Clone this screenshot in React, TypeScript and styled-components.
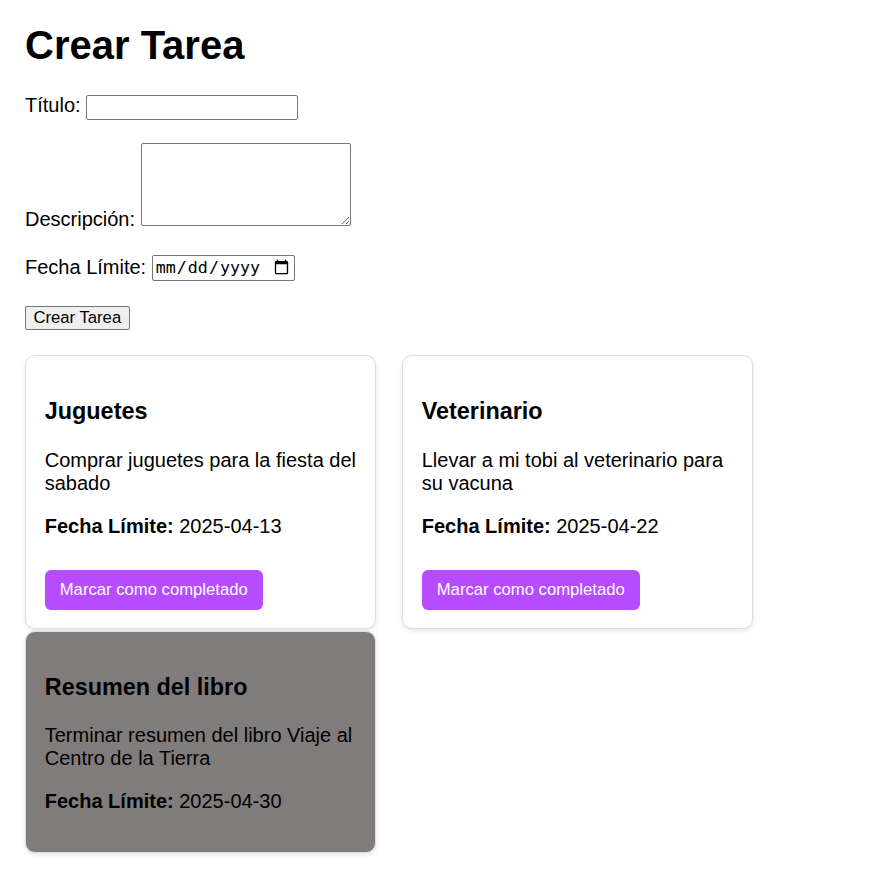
import { useState } from 'react'
import styled, { createGlobalStyle } from 'styled-components'

const GlobalStyle = createGlobalStyle`
  html, body {
    margin: 0;
    padding: 0;
    background: #fff;
  }
  body {
    font-family: "Liberation Sans", Arial, sans-serif;
    font-size: 20px;
    color: #000;
  }
`

type Task = {
  id: number
  title: string
  description: string
  dueDate: string
  completed: boolean
}

const initialTasks: Task[] = [
  { id: 1, title: 'Juguetes', description: 'Comprar juguetes para la fiesta del sabado', dueDate: '2025-04-13', completed: false },
  { id: 2, title: 'Veterinario', description: 'Llevar a mi tobi al veterinario para su vacuna', dueDate: '2025-04-22', completed: false },
  { id: 3, title: 'Resumen del libro', description: 'Terminar resumen del libro Viaje al Centro de la Tierra', dueDate: '2025-04-30', completed: true },
]

export default function App() {
  const [tasks, setTasks] = useState<Task[]>(initialTasks)
  const [title, setTitle] = useState('')
  const [description, setDescription] = useState('')
  const [dueDate, setDueDate] = useState('')

  const onSubmit = (e: React.FormEvent) => {
    e.preventDefault()
    if (!title.trim()) return
    setTasks([...tasks, { id: Date.now(), title, description, dueDate, completed: false }])
    setTitle('')
    setDescription('')
    setDueDate('')
  }

  const markDone = (id: number) => {
    setTasks(tasks.map(t => (t.id === id ? { ...t, completed: true } : t)))
  }

  return (
    <Page>
      <GlobalStyle />
      <Title>Crear Tarea</Title>
      <form onSubmit={onSubmit}>
        <Field>
          <label>Título:</label> <TextInput type="text" value={title} onChange={e => setTitle(e.target.value)} />
        </Field>
        <Field>
          <label>Descripción:</label>{' '}
          <TextArea value={description} onChange={e => setDescription(e.target.value)} />
        </Field>
        <Field>
          <label>Fecha Límite:</label>{' '}
          <DateInput type="date" value={dueDate} onChange={e => setDueDate(e.target.value)} />
        </Field>
        <SubmitButton type="submit">Crear Tarea</SubmitButton>
      </form>

      <TaskList>
        {tasks.map(task => (
          <Card key={task.id} $done={task.completed}>
            <CardTitle>{task.title}</CardTitle>
            <CardText>{task.description}</CardText>
            <CardText>
              <strong>Fecha Límite:</strong> {task.dueDate}
            </CardText>
            {!task.completed && <DoneButton onClick={() => markDone(task.id)}>Marcar como completado</DoneButton>}
          </Card>
        ))}
      </TaskList>
    </Page>
  )
}

const Page = styled.div`
  padding: 23px 25px 25px;
`

const Title = styled.h1`
  font-size: 40px;
  font-weight: bold;
  margin: 0 0 26px;
  line-height: normal;
`

const Field = styled.div`
  margin-bottom: 23.5px;
`

const TextInput = styled.input`
  box-sizing: border-box;
  width: 212px;
  height: 25px;
  border: 1px solid #767676;
  border-radius: 2px;
  padding: 1px 2px;
  font-size: 16.67px;
  font-family: "Liberation Sans", Arial, sans-serif;
`

const TextArea = styled.textarea`
  box-sizing: border-box;
  width: 210px;
  height: 83px;
  border: 1px solid #767676;
  border-radius: 2px;
  padding: 2px;
  font-size: 16.67px;
  font-family: "Liberation Mono", monospace;
  vertical-align: baseline;
`

const DateInput = styled.input`
  box-sizing: border-box;
  width: 143px;
  height: 26px;
  border: 1px solid #767676;
  border-radius: 2px;
  padding: 1px 2px;
  font-size: 16.67px;
  font-family: "DejaVu Sans Mono", monospace;
`

const SubmitButton = styled.button`
  box-sizing: border-box;
  height: 24px;
  padding: 1px 7.5px;
  border: 1px solid #767676;
  border-radius: 2px;
  background: #efefef;
  font-size: 16.67px;
  font-family: "Liberation Sans", Arial, sans-serif;
  color: #000;
  margin-top: 2px;
`

const TaskList = styled.div`
  display: flex;
  flex-wrap: wrap;
  column-gap: 26px;
  row-gap: 1.5px;
  margin-top: 25px;
`

const Card = styled.div<{ $done: boolean }>`
  box-sizing: border-box;
  width: 351px;
  padding: 18.75px;
  border: 1px solid #ddd;
  border-radius: 10px;
  background: ${p => (p.$done ? '#807c7c' : '#fff')};
  box-shadow: 0 2px 5px rgba(0, 0, 0, 0.1);
`

const CardTitle = styled.h3`
  font-size: 23.4px;
  font-weight: bold;
  margin: 23.4px 0;
`

const CardText = styled.p`
  margin: 20px 0;
  font-size: 20px;
`

const DoneButton = styled.button`
  display: block;
  margin-top: 32px;
  padding: 10px 15px;
  border: none;
  border-radius: 6px;
  background: #b74bff;
  color: #fff;
  font-size: 16.67px;
  font-family: "Liberation Sans", Arial, sans-serif;
  cursor: pointer;
`
